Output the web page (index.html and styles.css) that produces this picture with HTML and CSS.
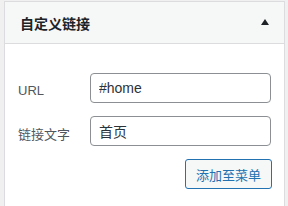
FILE: index.html
```html
<!DOCTYPE html>
<html lang="zh-CN">
<head>
    <meta charset="UTF-8">
    <title>自定义链接</title>
    <link rel="stylesheet" href="styles.css">
</head>
<body>
    <div class="panel">
        <div class="panel-title">
            <h3>自定义链接</h3>
            <span class="toggle-arrow"></span>
        </div>
        <div class="panel-body">
            <div class="field-row">
                <label class="field-label" for="link-url">URL</label>
                <input class="field-input" id="link-url" type="text" value="#home">
            </div>
            <div class="field-row">
                <label class="field-label" for="link-text">链接文字</label>
                <input class="field-input" id="link-text" type="text" value="首页">
            </div>
            <div class="actions">
                <button class="button" type="button">添加至菜单</button>
            </div>
        </div>
    </div>
</body>
</html>
```

FILE: styles.css
```css
:root {
    --bg-color: #f0f0f1;
    --border-color: #dcdcde;
    --title-bg: #f6f7f7;
    --text-color: #1d2327;
    --label-color: #50575e;
    --input-border: #8c8f94;
    --primary-color: #2271b1;
}

* {
    margin: 0;
    padding: 0;
    box-sizing: border-box;
}

body {
    background-color: var(--bg-color);
    font-family: "Liberation Sans", "Noto Sans CJK SC", sans-serif;
    font-size: 13px;
    color: var(--text-color);
    padding: 1px 3px 0 4px;
}

.panel {
    background-color: #fff;
    border: 1px solid var(--border-color);
    border-bottom: none;
    height: 205px;
}

.panel-title {
    display: flex;
    align-items: center;
    justify-content: space-between;
    height: 42px;
    padding: 0 15px;
    background-color: var(--title-bg);
    border-bottom: 1px solid var(--border-color);
}

.panel-title h3 {
    font-size: 14px;
    font-weight: 700;
    font-family: "Noto Sans CJK SC", sans-serif;
    line-height: 1;
}

.toggle-arrow {
    width: 0;
    height: 0;
    border-left: 4px solid transparent;
    border-right: 4px solid transparent;
    border-bottom: 6px solid var(--text-color);
    margin-top: -2px;
}

.panel-body {
    padding: 29px 12px 0 13px;
    display: flex;
    flex-direction: column;
    gap: 13px;
}

.field-row {
    display: flex;
    align-items: center;
    height: 30px;
}

.field-label {
    flex: 0 0 72px;
    color: var(--label-color);
    font-size: 13px;
    padding-top: 4px;
}

.field-input {
    flex: 1;
    min-width: 0;
    height: 30px;
    border: 1px solid var(--input-border);
    border-radius: 4px;
    padding: 0 8px;
    font-family: "Liberation Sans", "Noto Sans CJK SC", sans-serif;
    font-size: 14px;
    color: #2c3338;
    background-color: #fff;
    margin-right: 1px;
}

.actions {
    display: flex;
    justify-content: flex-end;
}

.button {
    height: 30px;
    padding: 0 10px;
    border: 1px solid var(--primary-color);
    border-radius: 3px;
    background-color: var(--title-bg);
    color: var(--primary-color);
    font-family: "Noto Sans CJK SC", sans-serif;
    font-size: 13px;
}
```
